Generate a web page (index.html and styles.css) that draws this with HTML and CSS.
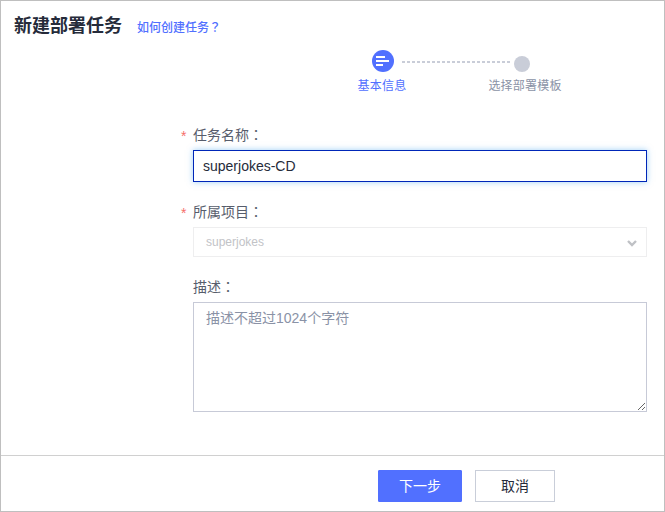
FILE: index.html
```html
<!DOCTYPE html>
<html lang="zh-CN">
<head>
<meta charset="utf-8">
<title>新建部署任务</title>
<link rel="stylesheet" href="styles.css">
</head>
<body>
<div class="panel">
  <header class="header">
    <h1 class="title">新建部署任务</h1>
    <a class="help">如何创建任务<span class="mark" lang="zh-TW">？</span></a>
  </header>
  <div class="steps">
    <div class="step active">
      <svg class="dot" width="22" height="22" viewBox="0 0 22 22"><circle cx="11" cy="11" r="11" fill="#5170ff"/><path d="M4 7h9M4 11h13M4 15h7" stroke="#fff" stroke-width="2"/></svg>
      <span>基本信息</span>
    </div>
    <svg class="line" width="108" height="2" viewBox="0 0 108 2"><path d="M0 1h108" stroke="#c9cdd8" stroke-width="2" stroke-dasharray="3 2"/></svg>
    <div class="step">
      <svg class="dot" width="16" height="16" viewBox="0 0 16 16"><circle cx="8" cy="8" r="8" fill="#c9cdd8"/></svg>
      <span>选择部署模板</span>
    </div>
  </div>
  <form class="form">
    <label class="label required">任务名称<span class="mark" lang="zh-TW">：</span></label>
    <div class="input">superjokes-CD</div>
    <label class="label required">所属项目<span class="mark" lang="zh-TW">：</span></label>
    <div class="select">
      <span>superjokes</span>
      <svg width="10" height="7" viewBox="0 0 10 7"><path d="M1 1l4 4 4-4" fill="none" stroke="#bfc1c5" stroke-width="2.4"/></svg>
    </div>
    <label class="label">描述<span class="mark" lang="zh-TW">：</span></label>
    <textarea class="textarea" placeholder="描述不超过1024个字符"></textarea>
  </form>
  <footer class="footer">
    <div class="button primary">下一步</div>
    <div class="button">取消</div>
  </footer>
</div>
</body>
</html>
```
FILE: styles.css
```css
* { box-sizing: border-box; }
body {
  margin: 0;
  font: 14px/20px "Liberation Sans", "Noto Sans CJK SC", sans-serif;
  color: #575d6c;
  background: #fff;
}
.panel {
  display: flex;
  flex-direction: column;
  width: 665px;
  height: 512px;
  border: 1px solid #bfbfbf;
  overflow: hidden;
}
.header {
  display: flex;
  align-items: center;
  gap: 15px;
  height: 49px;
  padding-left: 13px;
}
.title {
  margin: 0;
  font-size: 18px;
  line-height: 26px;
  font-weight: 700;
  color: #252b3a;
}
.help {
  margin-top: 2px;
  font-size: 12px;
  font-weight: 500;
  font-family: "Noto Sans CJK SC", sans-serif;
  color: #5170ff;
}
.mark { font-family: "Noto Sans CJK TC", sans-serif; }
.steps {
  display: flex;
  height: 72px;
  padding-left: 356px;
}
.step {
  display: flex;
  flex-direction: column;
  align-items: center;
  width: 50px;
  font-size: 12px;
  line-height: 16px;
  letter-spacing: .2px;
  white-space: nowrap;
  color: #8a92a6;
}
.active { color: #5170ff; }
.dot { margin-bottom: 6px; }
.active .dot { margin-left: 2px; }
.step:last-child { width: 74px; }
.step:last-child .dot {
  margin-top: 6px;
  margin-right: 6px;
}
.line { margin: 11px -22px 0 -5px; }
.form {
  display: flex;
  flex-direction: column;
  height: 333px;
  padding: 3px 17px 0 192px;
}
.label {
  position: relative;
  height: 20px;
  line-height: 18px;
}
.required::before {
  content: "*";
  position: absolute;
  left: -12px;
  top: 2px;
  color: #f66f6a;
}
.input {
  height: 32px;
  margin: 5px 0 20px;
  padding: 0 9px;
  border: 1px solid #0026b8;
  box-shadow: 0 0 6px rgba(60, 160, 240, .5);
  line-height: 31px;
  color: #252b3a;
}
.select {
  display: flex;
  align-items: center;
  justify-content: space-between;
  height: 30px;
  margin: 5px 0 20px;
  padding: 0 9px 0 12px;
  border: 1px solid #eeeeef;
  font-size: 12px;
  color: #c2c3c7;
}
.select svg { margin-top: 3px; }
.textarea {
  height: 110px;
  margin: 5px 0 0;
  padding: 5px 12px;
  border: 1px solid #c7cad7;
  font: inherit;
  resize: both;
  outline: none;
}
.textarea::placeholder { color: #8a92a6; }
.footer {
  display: flex;
  gap: 13px;
  height: 56px;
  padding: 14px 0 0 377px;
  border-top: 1px solid #d0d0d0;
}
.button {
  width: 80px;
  height: 32px;
  border: 1px solid #c9ced9;
  line-height: 30px;
  text-align: center;
  color: #252b3a;
}
.primary {
  width: 84px;
  border-color: #5170ff;
  border-radius: 1px;
  background: #5170ff;
  color: #fff;
}
```
